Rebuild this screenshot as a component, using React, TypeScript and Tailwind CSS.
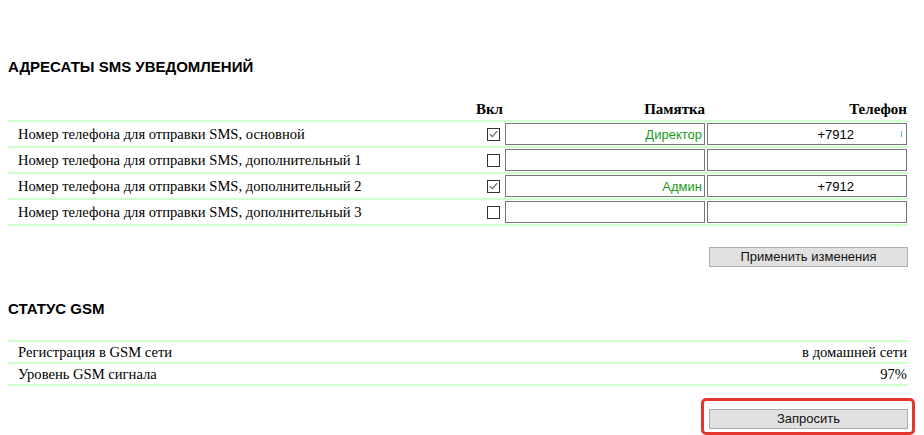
const SERIF = "font-['Liberation_Serif','Times_New_Roman',serif]";
const SANS = "font-['Liberation_Sans',Arial,sans-serif]";

const recipients = [
  { label: "Номер телефона для отправки SMS, основной", on: true, memo: "Директор", phone: "+7912", caret: true },
  { label: "Номер телефона для отправки SMS, дополнительный 1", on: false, memo: "", phone: "" },
  { label: "Номер телефона для отправки SMS, дополнительный 2", on: true, memo: "Админ", phone: "+7912" },
  { label: "Номер телефона для отправки SMS, дополнительный 3", on: false, memo: "", phone: "" },
];

const status = [
  { label: "Регистрация в GSM сети", value: "в домашней сети" },
  { label: "Уровень GSM сигнала", value: "97%" },
];

function Check({ on }: { on: boolean }) {
  return (
    <span className="flex h-[13px] w-[13px] items-center justify-center border border-[#333] bg-white">
      {on && (
        <svg width="9" height="8" viewBox="0 0 9 8" fill="none">
          <path d="M0.8 4.2 L3.4 6.6 L8.2 1.2" stroke="#666" strokeWidth="1.2" />
        </svg>
      )}
    </span>
  );
}

function Btn({ children }: { children: React.ReactNode }) {
  return (
    <button
      className={`h-[20px] w-[199px] border border-[#adadad] bg-[#e1e1e1] text-[13px] leading-[18px] text-[#111] ${SANS}`}
    >
      {children}
    </button>
  );
}

export default function App() {
  return (
    <div className={`min-h-[435px] bg-white px-2 text-black ${SERIF}`}>
      <div className="w-[900px] pt-[57px]">
        <h2 className={`h-[20px] text-[15px] font-bold leading-[20px] ${SANS}`}>
          АДРЕСАТЫ SMS УВЕДОМЛЕНИЙ
        </h2>

        <div className="mt-[24px]">
          <div className="flex h-[21px] border-b-2 border-[#ccffcc] text-[15px] font-bold leading-[17px]">
            <div className="flex-1" />
            <div className="w-[40px] text-right">Вкл</div>
            <div className="ml-[2px] w-[200px] text-right">Памятка</div>
            <div className="ml-[2px] w-[200px] text-right">Телефон</div>
            <div className="w-[1px]" />
          </div>
          {recipients.map((r) => (
            <div
              key={r.label}
              className="flex h-[26px] items-center border-b-2 border-[#ccffcc] text-[14.6px] leading-[17px]"
            >
              <div className="flex-1 pl-[10px]">{r.label}</div>
              <Check on={r.on} />
              <input
                readOnly
                value={r.memo}
                className={`ml-[5px] h-[22px] w-[200px] border border-[#767676] bg-white px-[2px] text-right text-[13px] text-[#1a9a1a] outline-none ${SANS}`}
              />
              <div className="relative ml-[2px] h-[22px] w-[200px]">
                <input
                  readOnly
                  value={r.phone}
                  className={`h-[22px] w-[200px] border border-[#767676] bg-white pr-[52px] text-right text-[13px] text-black outline-none ${SANS}`}
                />
                {r.caret && (
                  <span className="absolute right-[5px] top-[8px] h-[6px] w-[1px] bg-[#5ab4f0]" />
                )}
              </div>
              <div className="w-[1px]" />
            </div>
          ))}
        </div>

        <div className="mt-[21px] flex justify-end">
          <Btn>Применить изменения</Btn>
        </div>

        <h2 className={`mt-[32px] h-[20px] text-[15px] font-bold leading-[20px] ${SANS}`}>
          СТАТУС GSM
        </h2>

        <div className="mt-[21px] border-t-2 border-[#ccffcc]">
          {status.map((s) => (
            <div
              key={s.label}
              className="flex h-[22px] items-center border-b-2 border-[#ccffcc] text-[14.6px] leading-[17px]"
            >
              <div className="flex-1 pl-[10px]">{s.label}</div>
              <div className="pr-[1px] text-right">{s.value}</div>
            </div>
          ))}
        </div>

        <div className="mt-[12px] flex justify-end">
          <div className="mr-[-7px] rounded-[5px] border-[3px] border-[#e3372d] pb-[2px] pl-[5px] pr-[4px] pt-[5px]">
            <Btn>Запросить</Btn>
          </div>
        </div>
      </div>
    </div>
  );
}
